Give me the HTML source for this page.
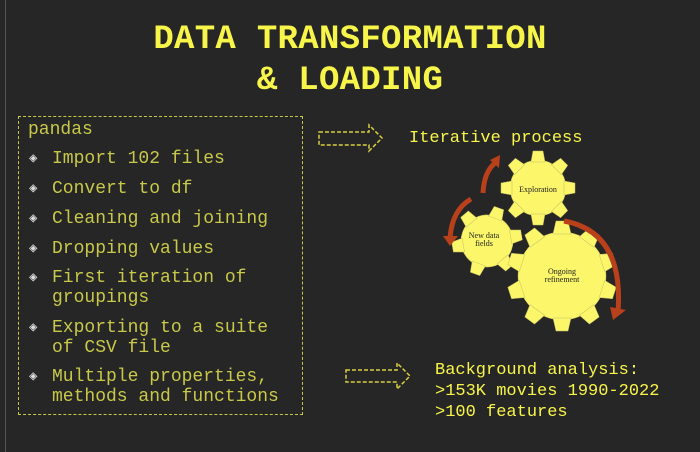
<!DOCTYPE html><html><head><style>
body{margin:0;width:700px;height:452px;background:#262626;overflow:hidden;position:relative;font-family:"Liberation Mono",monospace}
.t{position:absolute;left:0;width:700px;text-align:center;color:#f8f54a;font-weight:bold;font-size:34px;letter-spacing:0.3px}
.box{position:absolute;left:18px;top:116px;width:285px;height:299px;border:1px dashed #c8c84a;box-sizing:border-box}
.l{position:absolute;color:#c8c84a;font-size:18px;line-height:20px;white-space:pre}
.d{position:absolute;color:#ddd;font-size:14px}
.y{position:absolute;color:#f8f54a;font-size:17px;line-height:21px;white-space:pre}
</style></head><body>
<div style="position:absolute;left:5px;top:0;width:1px;height:452px;background:#555"></div>
<div class="t" style="top:21px">DATA TRANSFORMATION</div>
<div class="t" style="top:62px">&amp; LOADING</div>
<div class="box"></div>
<div class="l" style="left:28px;top:120px">pandas</div>
<div class="d" style="left:29px;top:150px">◈</div><div class="l" style="left:52px;top:149px">Import 102 files</div>
<div class="d" style="left:29px;top:180px">◈</div><div class="l" style="left:52px;top:179px">Convert to df</div>
<div class="d" style="left:29px;top:210px">◈</div><div class="l" style="left:52px;top:209px">Cleaning and joining</div>
<div class="d" style="left:29px;top:240px">◈</div><div class="l" style="left:52px;top:239px">Dropping values</div>
<div class="d" style="left:29px;top:269px">◈</div><div class="l" style="left:52px;top:268px">First iteration of
groupings</div>
<div class="d" style="left:29px;top:319px">◈</div><div class="l" style="left:52px;top:318px">Exporting to a suite
of CSV file</div>
<div class="d" style="left:29px;top:368px">◈</div><div class="l" style="left:52px;top:367px">Multiple properties,
methods and functions</div>
<div class="y" style="left:409px;top:128px">Iterative process</div>
<div class="y" style="left:435px;top:360px">Background analysis:
&gt;153K movies 1990-2022
&gt;100 features</div>
<svg width="700" height="452" style="position:absolute;left:0;top:0">
<g fill="none" stroke="#d8d040" stroke-width="1.5" stroke-dasharray="4,2">
<path d="M319 132H369V125L382 138L369 151V145H319Z"/>
<path d="M346 370H397V363L410 376L397 389V382H346Z"/>
</g>
<g fill="#fbf66a" stroke="#c8c060" stroke-width="0.5">
<g transform="translate(538,188)"><circle r="28"/>
<g><path id="ta" d="M-7,-26L-5,-37H5L7,-26Z"/><use href="#ta" transform="rotate(45)"/><use href="#ta" transform="rotate(90)"/><use href="#ta" transform="rotate(135)"/><use href="#ta" transform="rotate(180)"/><use href="#ta" transform="rotate(225)"/><use href="#ta" transform="rotate(270)"/><use href="#ta" transform="rotate(315)"/></g></g>
<g transform="translate(487,241) rotate(20)"><circle r="26"/>
<path id="tb" d="M-7,-24L-5,-35H5L7,-24Z"/><use href="#tb" transform="rotate(60)"/><use href="#tb" transform="rotate(120)"/><use href="#tb" transform="rotate(180)"/><use href="#tb" transform="rotate(240)"/><use href="#tb" transform="rotate(300)"/></g>
<g transform="translate(562,276)"><circle r="44"/>
<path id="tc" d="M-9,-42L-6,-55H6L9,-42Z"/><use href="#tc" transform="rotate(36)"/><use href="#tc" transform="rotate(72)"/><use href="#tc" transform="rotate(108)"/><use href="#tc" transform="rotate(144)"/><use href="#tc" transform="rotate(180)"/><use href="#tc" transform="rotate(216)"/><use href="#tc" transform="rotate(252)"/><use href="#tc" transform="rotate(288)"/><use href="#tc" transform="rotate(324)"/></g>
</g>
<g fill="none" stroke="#b8401a" stroke-width="5">
<path d="M483 193Q484 172 495 163"/>
<path d="M471 199Q452 210 450 238"/>
<path d="M564 221Q624 232 618 312"/>
</g>
<g fill="#b8401a">
<path d="M490 160L500 155L499 168Z"/>
<path d="M443 236L458 236L450 246Z"/>
<path d="M610 307L626 310L613 320Z"/>
</g>
<g font-family="Liberation Serif,serif" font-size="8" fill="#222" text-anchor="middle">
<text x="538" y="192">Exploration</text>
<text x="484" y="238">New data</text><text x="484" y="246">fields</text>
<text x="562" y="274">Ongoing</text><text x="562" y="282">refinement</text>
</g>
</svg>
</body></html>
